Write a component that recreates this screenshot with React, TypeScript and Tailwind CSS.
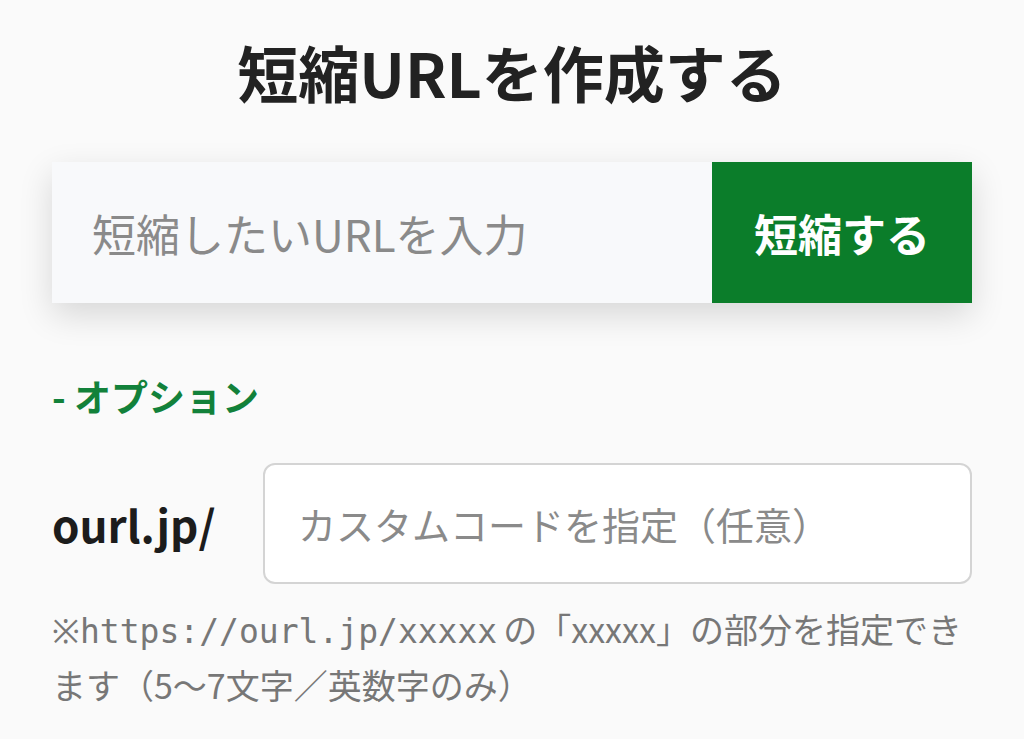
import React from "react";

const jp = "font-['Noto_Sans_CJK_JP',sans-serif]";

export default function App() {
  return (
    <div className={`min-h-[739px] w-full bg-[#fafafa] px-[52px] ${jp}`}>
      <h1 className="pt-[41px] text-center text-[61px] font-bold leading-none text-[#222]">
        短縮URLを作成する
      </h1>

      <form
        className="mt-[60px] flex h-[141px] shadow-[0_12px_32px_rgba(0,0,0,0.14)]"
        onSubmit={(e) => e.preventDefault()}
      >
        <input
          type="text"
          placeholder="短縮したいURLを入力"
          className="min-w-0 flex-1 bg-[#f8f9fb] pl-[40px] text-[44px] text-[#333] outline-none placeholder:text-[#8a8a8a]"
        />
        <button
          type="submit"
          className="w-[260px] bg-[#0b7d2a] text-[44px] font-bold text-white"
        >
          短縮する
        </button>
      </form>

      <div className="mt-[75px] text-[37px] font-bold leading-none text-[#12813a]">
        -&nbsp;オプション
      </div>

      <div className="mt-[48px] flex items-center">
        <span className="w-[211px] shrink-0 text-[44px] font-bold text-[#1c1c1c]">
          ourl.jp/
        </span>
        <input
          type="text"
          placeholder="カスタムコードを指定（任意）"
          className="h-[121px] min-w-0 flex-1 rounded-[12px] border-2 border-[#d4d4d4] bg-white pl-[33px] text-[38px] outline-none placeholder:text-[#8a8a8a]"
        />
      </div>

      <p className="mt-[18px] text-[34px] leading-[53px] text-[#777]">
        <span className="mr-[6px] font-['DejaVu_Sans_Mono',monospace] text-[33px]">
          ※https://ourl.jp/xxxxx
        </span>
        <span>の「xxxxx」の部分を指定できます（5〜7文字／英数字のみ）</span>
      </p>
    </div>
  );
}
